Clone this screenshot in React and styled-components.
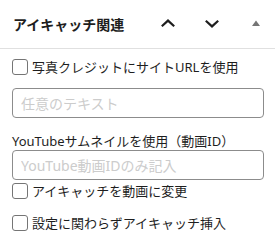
import styled, { createGlobalStyle } from "styled-components";

const GlobalStyle = createGlobalStyle`
  html, body {
    margin: 0;
    padding: 0;
    background: #ffffff;
  }
  body {
    font-family: "Noto Sans", "Noto Sans CJK JP", sans-serif;
    color: #1e1e1e;
  }
`;

const Panel = styled.div`
  width: 275px;
  height: 242px;
  background: #ffffff;
  overflow: hidden;
`;

const Header = styled.div`
  display: flex;
  align-items: center;
  height: 48px;
  padding: 0 7px 0 13px;
  border-bottom: 1px solid #e0e0e0;
  gap: 20px;
`;

const Title = styled.h2`
  flex: 1;
  margin: 0;
  font-size: 14px;
  font-weight: 600;
  color: #1e1e1e;
  white-space: nowrap;
`;

const IconButton = styled.button`
  display: flex;
  align-items: center;
  justify-content: center;
  width: 24px;
  height: 24px;
  padding: 0;
  border: none;
  background: transparent;
  color: ${(p) => (p.$muted ? "#757575" : "#1e1e1e")};
`;

const Body = styled.div`
  display: flex;
  flex-direction: column;
  padding: 10px 11px 0 12px;
`;

const CheckRow = styled.label`
  display: flex;
  align-items: center;
  gap: 4px;
  height: 16px;
  margin-top: ${(p) => p.$top || 0}px;
  font-size: 13px;
  line-height: 16px;
  color: #1e1e1e;
  white-space: nowrap;
`;

const Box = styled.input.attrs({ type: "checkbox" })`
  appearance: none;
  flex: none;
  width: 16px;
  height: 16px;
  margin: 0;
  border: 1px solid #757575;
  border-radius: 3px;
  background: #ffffff;
`;

const TextField = styled.input`
  box-sizing: border-box;
  width: 100%;
  height: 30px;
  margin-top: ${(p) => p.$top || 0}px;
  padding: 0 8px;
  border: 1px solid #8c8c8c;
  border-radius: 4px;
  font-family: inherit;
  font-size: 14px;
  color: #1e1e1e;
  outline: none;

  &::placeholder {
    color: #cccccc;
  }
`;

const FieldLabel = styled.div`
  margin-top: 14px;
  font-size: 13px;
  line-height: 18px;
  color: #1e1e1e;
  white-space: nowrap;
`;

function ChevronUp() {
  return (
    <svg width="24" height="24" viewBox="0 0 24 24" fill="none">
      <path d="M5.8 14.2 L12 8.6 L18.2 14.2" stroke="currentColor" strokeWidth="2.2" />
    </svg>
  );
}

function ChevronDown() {
  return (
    <svg width="24" height="24" viewBox="0 0 24 24" fill="none">
      <path d="M5.8 8.8 L12 14.4 L18.2 8.8" stroke="currentColor" strokeWidth="2.2" />
    </svg>
  );
}

function Caret() {
  return (
    <svg width="24" height="24" viewBox="0 0 24 24">
      <polygon points="8,14 16,14 12,8.5" fill="currentColor" />
    </svg>
  );
}

export default function App() {
  return (
    <Panel>
      <GlobalStyle />
      <Header>
        <Title>アイキャッチ関連</Title>
        <IconButton aria-label="上へ移動">
          <ChevronUp />
        </IconButton>
        <IconButton aria-label="下へ移動">
          <ChevronDown />
        </IconButton>
        <IconButton $muted aria-label="パネルを閉じる">
          <Caret />
        </IconButton>
      </Header>

      <Body>
        <CheckRow>
          <Box />
          写真クレジットにサイトURLを使用
        </CheckRow>
        <TextField $top={13} placeholder="任意のテキスト" />

        <FieldLabel>YouTubeサムネイルを使用（動画ID）</FieldLabel>
        <TextField placeholder="YouTube動画IDのみ記入" />

        <CheckRow $top={3}>
          <Box />
          アイキャッチを動画に変更
        </CheckRow>
        <CheckRow $top={16}>
          <Box />
          設定に関わらずアイキャッチ挿入
        </CheckRow>
      </Body>
    </Panel>
  );
}
